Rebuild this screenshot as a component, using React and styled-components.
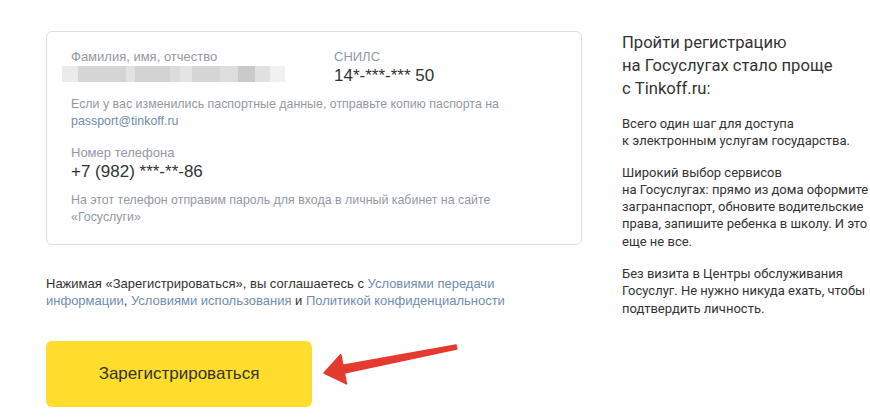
import React from 'react';
import styled, { createGlobalStyle } from 'styled-components';

const GlobalStyle = createGlobalStyle`
  html, body {
    margin: 0;
    padding: 0;
    background: #ffffff;
  }
  body {
    font-family: "Liberation Sans", Arial, sans-serif;
    color: #333333;
  }
`;

const Page = styled.div`
  display: flex;
  align-items: flex-start;
  gap: 40px;
  padding: 31px 0 0 46px;
  width: 870px;
  height: 420px;
  box-sizing: border-box;
  overflow: hidden;
`;

const Main = styled.div`
  width: 536px;
  flex-shrink: 0;
`;

const Card = styled.div`
  border: 1px solid #dddfe2;
  border-radius: 6px;
  padding: 17px 24px 18px 24px;
`;

const FieldsRow = styled.div`
  display: grid;
  grid-template-columns: 263px 1fr;
`;

const Label = styled.div`
  font-size: 13px;
  line-height: 16px;
  color: #9299a2;
  margin-top: ${(p) => p.$gap || 0}px;
`;

const Value = styled.div`
  font-size: 17px;
  line-height: 22px;
  color: #333333;
`;

const Blurred = styled.div`
  display: flex;
  height: 16px;
  margin: 1px 0 0 -9px;
`;

const Pixel = styled.div`
  width: ${(p) => p.$w}px;
  background: ${(p) => p.$c};
`;

const Note = styled.div`
  font-size: 12.4px;
  line-height: 17px;
  color: #9299a2;
  margin-top: 9px;
`;

const Link = styled.a`
  color: #6f8db0;
  text-decoration: none;
`;

const Agreement = styled.p`
  margin: 30px 0 0 0;
  font-size: 13px;
  line-height: 17px;
  color: #333333;
`;

const ActionRow = styled.div`
  display: flex;
  align-items: flex-start;
  margin-top: 32px;
`;

const Button = styled.button`
  width: 266px;
  height: 66px;
  border: none;
  border-radius: 6px;
  background: #ffdd2d;
  color: #333333;
  font-family: "Liberation Sans", Arial, sans-serif;
  font-size: 17px;
  cursor: pointer;
`;

const Arrow = styled.svg`
  margin: -1px 0 0 6px;
  flex-shrink: 0;
`;

const Side = styled.aside`
  width: 248px;
  font-family: Roboto, "Noto Sans", sans-serif;
  font-size: 13px;
  color: #333333;
  white-space: nowrap;
`;

const Heading = styled.h2`
  margin: 0;
  font-size: 16.6px;
  line-height: 23px;
  font-weight: 400;
  color: #333333;
`;

const SideText = styled.div`
  margin-top: ${(p) => p.$gap}px;
  line-height: 17.3px;
`;

const pixels = [
  [16, '#ebebeb'],
  [48, '#d5d5d5'],
  [9, '#e2e2e2'],
  [35, '#d2d2d2'],
  [10, '#dcdcdc'],
  [12, '#e4e4e4'],
  [28, '#d5d5d5'],
  [18, '#dddddd'],
  [17, '#cacaca'],
  [15, '#e1e1e1'],
  [15, '#f1f1f1'],
];

export default function App() {
  return (
    <>
      <GlobalStyle />
      <Page>
        <Main>
          <Card>
            <FieldsRow>
              <div>
                <Label>Фамилия, имя, отчество</Label>
                <Blurred>
                  {pixels.map(([w, c], i) => (
                    <Pixel key={i} $w={w} $c={c} />
                  ))}
                </Blurred>
              </div>
              <div>
                <Label>СНИЛС</Label>
                <Value>14*-***-*** 50</Value>
              </div>
            </FieldsRow>
            <Note>
              Если у вас изменились паспортные данные, отправьте копию паспорта на
              <br />
              <Link href="#">passport@tinkoff.ru</Link>
            </Note>
            <Label $gap={15}>Номер телефона</Label>
            <Value>+7 (982) ***-**-86</Value>
            <Note>
              На этот телефон отправим пароль для входа в личный кабинет на сайте
              <br />
              «Госуслуги»
            </Note>
          </Card>

          <Agreement>
            Нажимая «Зарегистрироваться», вы соглашаетесь с <Link href="#">Условиями передачи</Link>
            <br />
            <Link href="#">информации</Link>, <Link href="#">Условиями использования</Link> и{' '}
            <Link href="#">Политикой конфиденциальности</Link>
          </Agreement>

          <ActionRow>
            <Button>Зарегистрироваться</Button>
            <Arrow width="145" height="50" viewBox="0 0 145 50">
              <polygon
                points="6,33 22.7,14.5 24.8,25.3 138,5.1 138.8,9.1 26.4,33.1 28.5,43.9"
                fill="#e53a2f"
                stroke="#e53a2f"
                strokeWidth="1.5"
                strokeLinejoin="round"
              />
            </Arrow>
          </ActionRow>
        </Main>

        <Side>
          <Heading>
            Пройти регистрацию
            <br />
            на Госуслугах стало проще
            <br />с Tinkoff.ru:
          </Heading>
          <SideText $gap={15}>
            Всего один шаг для доступа
            <br />к электронным услугам государства.
          </SideText>
          <SideText $gap={14}>
            Широкий выбор сервисов
            <br />
            на Госуслугах: прямо из дома оформите
            <br />
            загранпаспорт, обновите водительские
            <br />
            права, запишите ребенка в школу. И это
            <br />
            еще не все.
          </SideText>
          <SideText $gap={15}>
            Без визита в Центры обслуживания
            <br />
            Госуслуг. Не нужно никуда ехать, чтобы
            <br />
            подтвердить личность.
          </SideText>
        </Side>
      </Page>
    </>
  );
}
